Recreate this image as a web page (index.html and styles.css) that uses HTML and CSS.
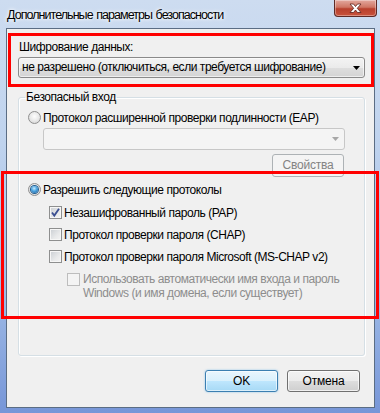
FILE: index.html
```html
<!DOCTYPE html>
<html lang="ru">
<head>
<meta charset="utf-8">
<title>Дополнительные параметры безопасности</title>
<link rel="stylesheet" href="styles.css">
</head>
<body>
<div class="window">
  <div class="titlebar">
    <span class="title">Дополнительные параметры безопасности</span>
    <div class="close">
      <svg width="43" height="17" viewBox="0 0 43 17">
        <path d="M16 4 L19.5 4 L21.5 6.5 L23.5 4 L27 4 L23.3 8.3 L27 12.5 L23.5 12.5 L21.5 10 L19.5 12.5 L16 12.5 L19.7 8.3 Z" fill="#fff" stroke="#5a1f1a" stroke-width="0.8" stroke-linejoin="round"/>
      </svg>
    </div>
  </div>
  <div class="client">
    <div class="enc">
      <div class="label">Шифрование данных:</div>
      <div class="select">
        <span>не разрешено (отключиться, если требуется шифрование)</span>
        <svg class="arrow" width="7" height="4" viewBox="0 0 7 4"><path d="M0 0 H7 L3.5 4 Z" fill="#000"/></svg>
      </div>
    </div>
    <fieldset class="group">
      <legend>Безопасный вход</legend>
      <div class="radio-row">
        <span class="radio"></span>
        <span>Протокол расширенной проверки подлинности (EAP)</span>
      </div>
      <div class="combo-disabled">
        <svg class="arrow" width="7" height="4" viewBox="0 0 7 4"><path d="M0 0 H7 L3.5 4 Z" fill="#a7a7a7"/></svg>
      </div>
      <div class="props-row">
        <button class="btn btn-disabled" disabled>Свойства</button>
      </div>
      <div class="radio-row radio-row2">
        <span class="radio checked"></span>
        <span>Разрешить следующие протоколы</span>
      </div>
      <div class="checks">
        <div class="check-row">
          <span class="check">
            <svg width="11" height="11" viewBox="0 0 11 11"><path d="M2 5.5 L4.3 8.6 L9 1.8" fill="none" stroke="#3b4f91" stroke-width="1.8"/></svg>
          </span>
          <span>Незашифрованный пароль (PAP)</span>
        </div>
        <div class="check-row">
          <span class="check"></span>
          <span>Протокол проверки пароля (CHAP)</span>
        </div>
        <div class="check-row">
          <span class="check"></span>
          <span>Протокол проверки пароля Microsoft (MS-CHAP v2)</span>
        </div>
        <div class="check-row sub disabled">
          <span class="check check-disabled"></span>
          <span class="sub-text">Использовать автоматически имя входа и пароль<br>Windows (и имя домена, если существует)</span>
        </div>
      </div>
    </fieldset>
    <div class="buttons">
      <button class="btn btn-default">OK</button>
      <button class="btn">Отмена</button>
    </div>
  </div>
  <div class="mark mark1"></div>
  <div class="mark mark2"></div>
</div>
</body>
</html>
```
FILE: styles.css
```css
* { box-sizing: border-box; }
html, body { margin: 0; padding: 0; }
body {
  width: 380px;
  height: 413px;
  overflow: hidden;
  font-family: "Liberation Sans", Arial, sans-serif;
  font-size: 12px;
  letter-spacing: -0.45px;
  color: #000;
  white-space: nowrap;
}
.window {
  width: 380px;
  height: 413px;
  position: relative;
  display: flex;
  flex-direction: column;
  background: linear-gradient(to bottom, #cddcf0 0%, #bfd3ee 35%, #9fbbe6 70%, #7796d8 100%);
}
.titlebar {
  height: 28px;
  display: flex;
  align-items: flex-start;
}
.title {
  padding: 6px 0 0 7px;
  font-size: 12.5px;
  letter-spacing: -0.95px;
  word-spacing: 1px;
  line-height: 18px;
  text-shadow: 0 0 5px #fff, 0 0 3px #fff;
}
.close {
  margin-left: auto;
  margin-right: 3px;
  width: 43px;
  height: 17px;
  border: 1px solid #5e2a26;
  border-top: none;
  border-radius: 0 0 4px 4px;
  background: linear-gradient(to bottom, #e3a89e 0%, #cf7664 45%, #b8402d 55%, #c9533c 100%);
  box-shadow: inset 0 0 0 1px rgba(255,255,255,0.35);
  display: flex;
  position: relative;
}
.close svg { position: absolute; left: -1px; top: 0; }
.client {
  margin: 0 5px 5px 6px;
  height: 380px;
  background: #f0f0f0;
  border: 1px solid #5b6d84;
}
.enc {
  padding: 11px 0 0 11px;
}
.label {
  margin-left: 1px;
  line-height: 15px;
}
.select {
  margin-top: 2px;
  width: 347px;
  height: 21px;
  border: 1px solid #8a8a8a;
  border-radius: 3px;
  background: linear-gradient(to bottom, #f3f3f3 0%, #ebebeb 50%, #dedede 51%, #d4d4d4 100%);
  box-shadow: inset 0 0 0 1px rgba(255,255,255,0.6);
  display: flex;
  align-items: center;
  padding: 0 4px 0 3px;
  line-height: 15px;
}
.select span { flex: 1; }
.group {
  margin: 12px 0 0 11px;
  width: 347px;
  height: 266px;
  padding: 0;
  border: 1px solid #d5dfe5;
  border-radius: 3px;
  box-shadow: inset 1px 1px 0 #fff, 1px 1px 0 #fff;
  min-width: 0;
}
.group legend {
  margin-left: 6px;
  padding: 0 1px;
  line-height: 15px;
}
.radio-row {
  display: flex;
  align-items: center;
  gap: 2px;
  height: 15px;
  margin: 5px 0 0 9px;
}
.radio {
  width: 13px;
  height: 13px;
  border-radius: 50%;
  border: 1px solid #8f8f8f;
  background: radial-gradient(circle at 50% 40%, #fdfdfd 0%, #e9e9e9 50%, #cfcfcf 100%);
  display: flex;
  align-items: center;
  justify-content: center;
}
.radio.checked::after {
  content: "";
  width: 7px;
  height: 7px;
  border-radius: 50%;
  background: radial-gradient(circle at 45% 35%, #c9ecff 0%, #4aa3e0 45%, #1a5b97 100%);
  box-shadow: 0 0 0 1px #235d8f;
}
.combo-disabled {
  margin: 3px 0 0 24px;
  width: 302px;
  height: 22px;
  border: 1px solid #c7c7c7;
  border-radius: 3px;
  background: #f4f4f4;
  display: flex;
  align-items: center;
  justify-content: flex-end;
  padding-right: 5px;
}
.props-row {
  margin: 4px 0 0 253px;
  display: flex;
}
.btn {
  font: inherit;
  font-size: 12px;
  letter-spacing: -0.2px;
  color: #000;
  width: 73px;
  height: 22px;
  padding: 0;
  border: 1px solid #707070;
  border-radius: 3px;
  background: linear-gradient(to bottom, #f2f2f2 0%, #ebebeb 50%, #dddddd 51%, #cfcfcf 100%);
  box-shadow: inset 0 0 0 1px rgba(255,255,255,0.7);
  line-height: 15px;
}
.btn-disabled {
  width: 72px;
  height: 23px;
  color: #838383;
  border-color: #adb2b5;
  background: #f4f4f4;
  box-shadow: none;
}
.btn-default {
  border-color: #3c7fb1;
  background: linear-gradient(to bottom, #eaf6fd 0%, #d9f0fc 50%, #bee6fd 51%, #a7d9f5 100%);
  box-shadow: inset 0 0 0 1px rgba(255,255,255,0.6), 0 0 2px rgba(60,160,230,0.6);
}
.radio-row2 { margin-top: 5px; }
.checks {
  margin: 8px 0 0 30px;
  display: flex;
  flex-direction: column;
  gap: 7px;
}
.check-row {
  display: flex;
  align-items: center;
  gap: 2px;
  min-height: 15px;
}
.check {
  width: 13px;
  height: 13px;
  border: 1px solid #8e8f8f;
  background: linear-gradient(135deg, #c9cdd2 0%, #e8e9ea 60%, #f4f4f4 100%);
  box-shadow: inset 0 0 0 1px #f6f6f6;
  display: flex;
  align-items: center;
  justify-content: center;
  flex: none;
}
.check svg { margin-top: -1px; }
.check-row.sub {
  margin: 1px 0 0 18px;
  align-items: flex-start;
  gap: 3px;
}
.check-disabled {
  margin-top: 1px;
  border-color: #bdbdbd;
  background: #f4f4f4;
  box-shadow: none;
}
.sub-text {
  color: #8d8d8d;
  line-height: 14px;
}
.buttons {
  margin-top: 14px;
  padding-right: 14px;
  display: flex;
  justify-content: flex-end;
  gap: 9px;
}
.mark {
  position: absolute;
  border: 3px solid #ff0000;
  pointer-events: none;
}
.mark1 { left: 8px; top: 33px; width: 366px; height: 54px; }
.mark2 { left: 1px; top: 171px; width: 378px; height: 148px; }
```
